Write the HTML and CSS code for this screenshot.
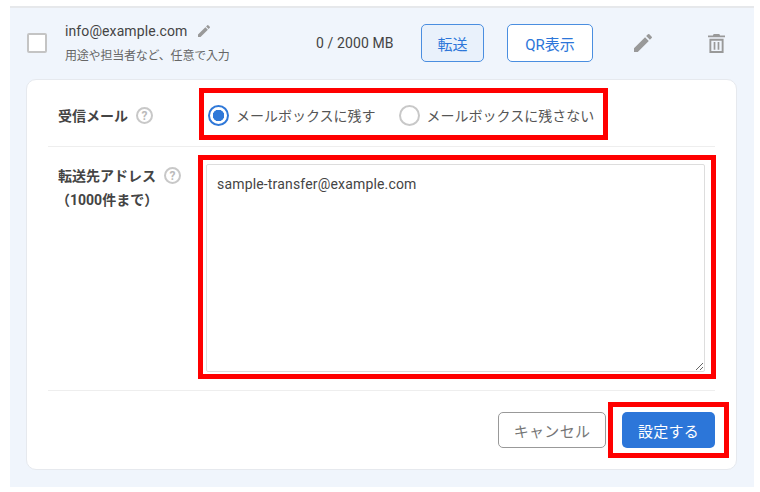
FILE: index.html
```html
<!DOCTYPE html>
<html lang="ja">
<head>
  <meta charset="UTF-8" />
  <title>転送設定</title>
  <link rel="stylesheet" href="styles.css">
</head>
<body>

  <div class="panel">
    <div class="account">
      <span class="checkbox"></span>
      <div class="account-info">
        <div class="account-mail">
          info@example.com
          <svg class="icon-small" viewBox="0 0 24 24"><path d="M3 17.25V21h3.75L17.81 9.94l-3.75-3.75L3 17.25zM20.71 7.04a1 1 0 0 0 0-1.41l-2.34-2.34a1 1 0 0 0-1.41 0l-1.83 1.83 3.75 3.75 1.83-1.83z"/></svg>
        </div>
        <div class="account-memo">用途や担当者など、任意で入力</div>
      </div>
      <div class="usage">0 / 2000 MB</div>
      <button class="btn-outline btn-active btn-transfer">転送</button>
      <button class="btn-outline btn-qr">QR表示</button>
      <svg class="icon-edit" viewBox="0 0 24 24"><path d="M3 17.25V21h3.75L17.81 9.94l-3.75-3.75L3 17.25zM20.71 7.04a1 1 0 0 0 0-1.41l-2.34-2.34a1 1 0 0 0-1.41 0l-1.83 1.83 3.75 3.75 1.83-1.83z"/></svg>
      <svg class="icon-trash" viewBox="0 0 18 20"><path d="M0 1.5h5.2L6 0h6l.8 1.5H18v2H0zM1.5 5h15v15h-15zM3.5 7v11h11V7zM6 8.5h1.8v8H6zM10.2 8.5H12v8h-1.8z" fill-rule="evenodd"/></svg>
    </div>

    <div class="card">
      <div class="row row-mail">
        <div class="row-label">
          <span>受信メール</span>
          <span class="help">?</span>
        </div>
        <div class="radios">
          <label class="radio radio-on"><span class="radio-mark"></span>メールボックスに残す</label>
          <label class="radio"><span class="radio-mark"></span>メールボックスに残さない</label>
        </div>
      </div>

      <div class="row row-address">
        <div class="row-label">
          <span>転送先アドレス<br><span class="label-sub">（1000件まで）</span></span>
          <span class="help">?</span>
        </div>
        <textarea class="address-input">sample-transfer@example.com</textarea>
      </div>

      <div class="actions">
        <button class="btn-cancel">キャンセル</button>
        <button class="btn-submit">設定する</button>
      </div>

      <div class="mark mark-radios"></div>
      <div class="mark mark-address"></div>
      <div class="mark mark-submit"></div>
    </div>
  </div>

</body>
</html>
```

FILE: styles.css
```css
body {
  margin: 0;
  background-color: #fff;
  color: #444;
  font-family: Roboto, "Noto Sans CJK JP", sans-serif;
  font-size: 14px;
}

button {
  font-family: inherit;
  cursor: pointer;
}

.panel {
  box-sizing: border-box;
  height: 481px;
  margin: 6px 6px 0 10px;
  border-top: 2px solid #e6e8eb;
  background-color: #f0f5fc;
}

.account {
  box-sizing: border-box;
  display: flex;
  align-items: center;
  height: 71px;
  padding-bottom: 1px;
}

.checkbox {
  box-sizing: border-box;
  width: 20px;
  height: 20px;
  margin-left: 17px;
  background: #fff;
  border: 2px solid #c4c4c4;
  border-radius: 2px;
}

.account-info {
  width: 251px;
  margin-left: 18px;
}

.account-mail {
  display: flex;
  align-items: center;
  gap: 9px;
  font-size: 14px;
  letter-spacing: 0.1px;
  line-height: 18px;
}

.account-memo {
  margin-top: 8px;
  font-size: 12px;
  letter-spacing: -0.2px;
  line-height: 16px;
  color: #666;
}

.icon-small {
  width: 16px;
  height: 16px;
  fill: #999;
}

.usage {
  width: 105px;
  font-size: 14px;
  letter-spacing: 0.1px;
}

.btn-outline {
  height: 38px;
  padding: 0;
  font-size: 15px;
  color: #2c76d9;
  background: #fff;
  border: 1px solid #4a8ee0;
  border-radius: 5px;
}

.btn-active {
  background: #e9f1fb;
}

.btn-transfer {
  width: 63px;
}

.btn-qr {
  width: 86px;
  margin-left: 23px;
}

.icon-edit {
  width: 24px;
  height: 24px;
  margin-left: 38px;
  fill: #999;
}

.icon-trash {
  width: 17px;
  height: 19px;
  margin-left: 53px;
  fill: #999;
}

.card {
  position: relative;
  box-sizing: border-box;
  height: 391px;
  margin: 0 17px 0 16px;
  padding: 0 21px;
  background: #fff;
  border: 1px solid #e6e9ee;
  border-radius: 10px;
}

.row {
  display: flex;
  padding-left: 10px;
  border-bottom: 1px solid #eee;
}

.row-mail {
  box-sizing: border-box;
  align-items: center;
  height: 67px;
  padding-top: 5px;
}

.row-address {
  box-sizing: border-box;
  height: 244px;
  padding-top: 17px;
}

.row-label {
  display: flex;
  flex: 0 0 148px;
  align-items: flex-start;
  gap: 8px;
  font-weight: 700;
  color: #444;
  line-height: 24px;
}

.row-mail .row-label {
  align-items: center;
}

.label-sub {
  display: inline-block;
  margin: 0 -4px 0 -2px;
  font-weight: 700;
}

.help {
  box-sizing: border-box;
  display: flex;
  align-items: center;
  justify-content: center;
  width: 17px;
  height: 17px;
  margin-top: 3px;
  border: 2px solid #c8c8c8;
  border-radius: 50%;
  color: #bbb;
  font-size: 12px;
  font-weight: 700;
  line-height: 1;
}

.row-mail .help {
  margin-top: 0;
}

.radios {
  display: flex;
  gap: 23px;
  padding-left: 2px;
}

.radio {
  display: flex;
  align-items: center;
  gap: 7px;
  line-height: 20px;
  color: #555;
}

.radio-mark {
  box-sizing: border-box;
  width: 21px;
  height: 21px;
  background: #fff;
  border: 2px solid #c8c8c8;
  border-radius: 50%;
}

.radio-on .radio-mark {
  border-color: #2f78d8;
  background: radial-gradient(circle, #2f78d8 0 5.5px, #fff 6px);
}

.address-input {
  box-sizing: border-box;
  width: 499px;
  height: 208px;
  margin: 0;
  padding: 9px 10px;
  font-family: inherit;
  font-size: 14px;
  letter-spacing: 0.17px;
  line-height: 20px;
  color: #444;
  background: #fff;
  border: 1px solid #ddd;
  border-radius: 2px;
  outline: none;
}

.actions {
  display: flex;
  justify-content: flex-end;
  gap: 16px;
  padding-top: 21px;
}

.btn-cancel,
.btn-submit {
  height: 36px;
  padding: 0;
  font-size: 15px;
  letter-spacing: 0.3px;
  border-radius: 5px;
}

.btn-cancel {
  width: 108px;
  color: #777;
  background: #fff;
  border: 1px solid #999;
}

.btn-submit {
  width: 93px;
  color: #fff;
  background: #2c76d9;
  border: none;
}

/* 赤枠の注釈 */
.mark {
  position: absolute;
  box-sizing: border-box;
  border: 5px solid #f00;
  pointer-events: none;
}

.mark-radios {
  left: 172px;
  top: 8px;
  width: 409px;
  height: 52px;
}

.mark-address {
  left: 171px;
  top: 75px;
  width: 518px;
  height: 224px;
}

.mark-submit {
  left: 581px;
  top: 322px;
  width: 121px;
  height: 56px;
}
```
